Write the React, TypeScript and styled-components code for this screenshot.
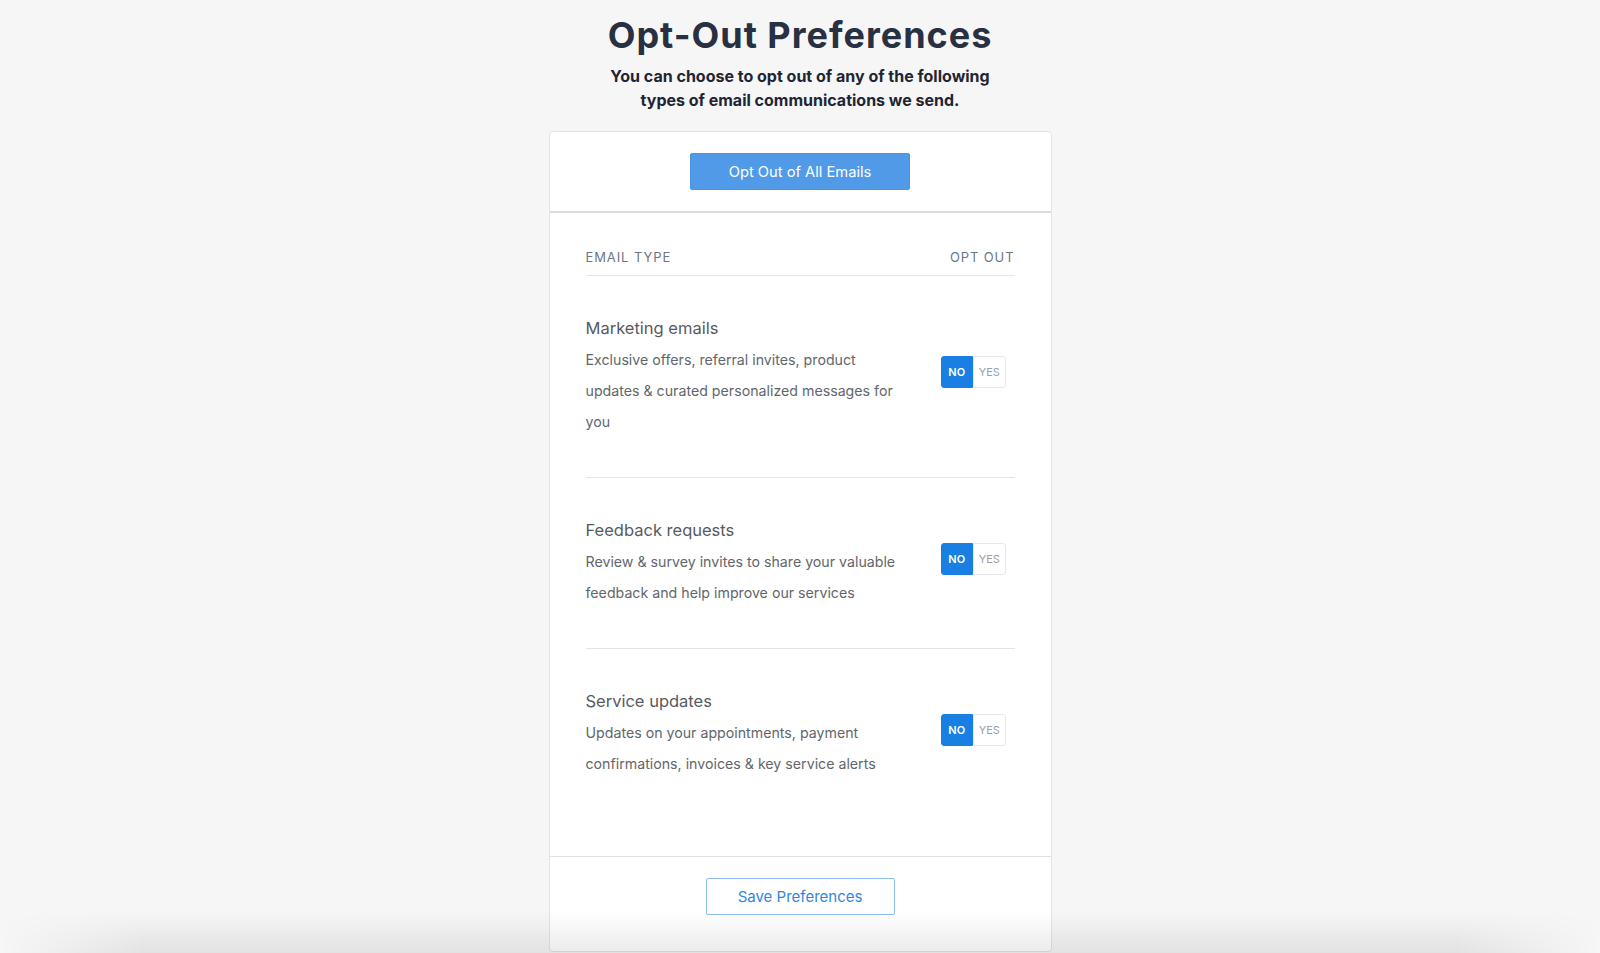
import React, {useState} from "react";
import styled, {createGlobalStyle} from "styled-components";

const GlobalStyle = createGlobalStyle`
  body {
    margin: 0;
    background: #f6f6f6;
    font-family: Inter, "Noto Sans", sans-serif;
    -webkit-font-smoothing: antialiased;
  }
`;

type EmailType = {
  id: string;
  title: string;
  text: string;
};

const emailTypes: EmailType[] = [
  {
    id: "marketing",
    title: "Marketing emails",
    text: "Exclusive offers, referral invites, product updates & curated personalized messages for you",
  },
  {
    id: "feedback",
    title: "Feedback requests",
    text: "Review & survey invites to share your valuable feedback and help improve our services",
  },
  {
    id: "service",
    title: "Service updates",
    text: "Updates on your appointments, payment confirmations, invoices & key service alerts",
  },
];

export default function App() {
  const [optOut, setOptOut] = useState<Record<string, boolean>>({});

  const setAll = () => {
    const next: Record<string, boolean> = {};
    emailTypes.forEach((t) => (next[t.id] = true));
    setOptOut(next);
  };

  return (
    <>
      <GlobalStyle />
      <Page>
        <Title>Opt-Out Preferences</Title>
        <Subtitle>
          You can choose to opt out of any of the following
          <br />
          types of email communications we send.
        </Subtitle>
        <Card>
          <CardTop>
            <PrimaryButton onClick={setAll}>Opt Out of All Emails</PrimaryButton>
          </CardTop>
          <CardBody>
            <TableHead>
              <span>Email Type</span>
              <span>Opt Out</span>
            </TableHead>
            {emailTypes.map((t, i) => (
              <Row key={t.id} last={i === emailTypes.length - 1}>
                <RowText>
                  <RowTitle>{t.title}</RowTitle>
                  <RowDesc>{t.text}</RowDesc>
                </RowText>
                <Toggle>
                  <ToggleOption
                    active={!optOut[t.id]}
                    side='left'
                    onClick={() => setOptOut({...optOut, [t.id]: false})}
                  >
                    NO
                  </ToggleOption>
                  <ToggleOption
                    active={!!optOut[t.id]}
                    side='right'
                    onClick={() => setOptOut({...optOut, [t.id]: true})}
                  >
                    YES
                  </ToggleOption>
                </Toggle>
              </Row>
            ))}
          </CardBody>
          <CardFooter>
            <OutlineButton>Save Preferences</OutlineButton>
          </CardFooter>
        </Card>
      </Page>
      <BottomShade />
    </>
  );
}

const Page = styled.main`
  display: flex;
  flex-direction: column;
  align-items: center;
  padding-top: 14px;
  min-height: 100vh;
  box-sizing: border-box;
`;
const Title = styled.h1`
  margin: 0;
  font-size: 36px;
  line-height: 42px;
  font-weight: 700;
  color: #283042;
  letter-spacing: 1px;
`;
const Subtitle = styled.p`
  margin: 8px 0 0;
  font-size: 16px;
  line-height: 24px;
  font-weight: 700;
  color: #1f2533;
  text-align: center;
`;
const Card = styled.section`
  width: 503px;
  box-sizing: border-box;
  margin-top: 19px;
  background: #fff;
  border: 1px solid #e3e3e3;
  border-radius: 4px;
`;
const CardTop = styled.div`
  display: flex;
  justify-content: center;
  padding: 21px 0;
  border-bottom: 2px solid #dcdcdc;
`;
const PrimaryButton = styled.button`
  width: 220px;
  height: 37px;
  border: 1px solid #4a92e3;
  border-radius: 2px;
  background: #519ae7;
  color: #fff;
  font-family: inherit;
  font-size: 14.7px;
  cursor: pointer;
`;
const CardBody = styled.div`
  padding: 0 36px 37px;
`;
const TableHead = styled.div`
  display: flex;
  justify-content: space-between;
  padding: 36px 0 10px;
  border-bottom: 1px solid #e6e6e6;
  font-size: 13px;
  line-height: 16px;
  letter-spacing: 0.9px;
  text-transform: uppercase;
  color: #6c7786;
`;
const Row = styled.div<{last?: boolean}>`
  display: flex;
  align-items: center;
  justify-content: space-between;
  padding: 41px 0 40px;
  border-bottom: ${(p) => (p.last ? "none" : "1px solid #e4e4e4")};
`;
const RowText = styled.div`
  width: 320px;
`;
const RowTitle = styled.div`
  font-size: 16.5px;
  line-height: 22px;
  color: #575b61;
`;
const RowDesc = styled.p`
  margin: 5px 0 0;
  font-size: 14.2px;
  line-height: 31px;
  color: #62666c;
`;
const Toggle = styled.div`
  display: flex;
  margin: 0 9px 10px 0;
`;
const ToggleOption = styled.button<{active: boolean; side: "left" | "right"}>`
  width: 32.5px;
  height: 32px;
  padding: 0;
  font-family: inherit;
  font-size: 11px;
  font-weight: ${(p) => (p.active ? 600 : 400)};
  cursor: pointer;
  color: ${(p) => (p.active ? "#fff" : "#9aa1ab")};
  background: ${(p) => (p.active ? "#1a7fe2" : "#fff")};
  border: 1px solid ${(p) => (p.active ? "#1a7fe2" : "#e6e8eb")};
  border-radius: ${(p) => (p.side === "left" ? "3px 0 0 3px" : "0 3px 3px 0")};
`;
const CardFooter = styled.div`
  display: flex;
  justify-content: center;
  padding: 21px 0 36px;
  border-top: 1px solid #e0e0e0;
`;
const OutlineButton = styled.button`
  width: 189px;
  height: 37px;
  background: #fff;
  border: 1px solid #8dbff3;
  border-radius: 2px;
  color: #2f88e0;
  font-family: inherit;
  font-size: 15px;
  cursor: pointer;
`;
const BottomShade = styled.div`
  position: fixed;
  left: 0;
  right: 0;
  bottom: 0;
  height: 42px;
  pointer-events: none;
  background: linear-gradient(to top, rgba(0, 0, 0, 0.08), rgba(0, 0, 0, 0));
  -webkit-mask-image: linear-gradient(to right, transparent, black 9%, black 91%, transparent);
  mask-image: linear-gradient(to right, transparent, black 9%, black 91%, transparent);
`;
